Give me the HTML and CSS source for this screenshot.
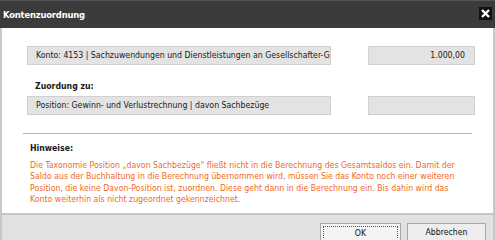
FILE: index.html
```html
<!DOCTYPE html>
<html>
<head>
<meta charset="utf-8">
<link rel="stylesheet" href="styles.css">
</head>
<body>
<div class="window">
  <div class="titlebar">
    <span class="title">Kontenzuordnung</span>
    <span class="close"><svg width="9" height="9" viewBox="0 0 9 9"><path d="M1 1L8 8M8 1L1 8" stroke="#fff" stroke-width="2.4"/></svg></span>
  </div>
  <div class="content">
    <div class="row first">
      <div class="field wide">Konto: 4153 | Sachzuwendungen und Dienstleistungen an Gesellschafter-G</div>
      <div class="field narrow amount">1.000,00</div>
    </div>
    <div class="label">Zuordung zu:</div>
    <div class="row">
      <div class="field wide">Position: Gewinn- und Verlustrechnung | davon Sachbezüge</div>
      <div class="field narrow"></div>
    </div>
    <div class="sep"></div>
    <div class="hint-title">Hinweise:</div>
    <p class="hint">Die Taxonomie Position „davon Sachbezüge" fließt nicht in die Berechnung des Gesamtsaldos ein. Damit der<br>Saldo aus der Buchhaltung in die Berechnung übernommen wird, müssen Sie das Konto noch einer weiteren<br>Position, die keine Davon-Position ist, zuordnen. Diese geht dann in die Berechnung ein. Bis dahin wird das<br>Konto weiterhin als nicht zugeordnet gekennzeichnet.</p>
  </div>
  <div class="footer">
    <button class="btn ok"><span class="focus">OK</span></button>
    <button class="btn">Abbrechen</button>
  </div>
</div>
</body>
</html>
```
FILE: styles.css
```css
html, body { margin: 0; padding: 0; background: #fff; }
body { font-family: "DejaVu Sans Condensed", "DejaVu Sans", sans-serif; font-size: 8.7px; color: #1a1a1a; }
.window { width: 495px; height: 240px; display: flex; flex-direction: column; box-sizing: border-box; overflow: hidden; }
.titlebar { height: 28px; background: #3b3b3b; border-top: 1px solid #555; display: flex; align-items: center; justify-content: space-between; padding: 0 3px 0 3px; box-sizing: border-box; flex: none; }
.title { color: #fff; font-weight: bold; font-size: 9.4px; letter-spacing: -0.2px; margin-top: -1px; }
.close { width: 13px; height: 13px; background: #111; display: flex; align-items: center; justify-content: center; margin-top: -2px; }
.content { flex: 1; min-height: 0; overflow: hidden; border-left: 2px solid #c8c8c8; border-right: 2px solid #c8c8c8; padding: 18px 0 0 25px; box-sizing: border-box; }
.row { display: flex; gap: 37px; }
.field { height: 19px; box-sizing: border-box; background: #e3e3e3; border: 1px solid #d0d0d0; line-height: 17px; padding: 0 8px; white-space: nowrap; overflow: hidden; }
.wide { width: 304px; }
.narrow { width: 107px; }
.amount { text-align: right; padding-right: 9px; }
.label { font-weight: bold; margin: 15px 0 4px 8px; line-height: 12px; }
.sep { height: 1px; background: #b5b5b5; width: 449px; margin: 18px 0 0 -4px; }
.hint-title { font-weight: bold; margin: 8px 0 0 3px; line-height: 12px; }
.hint { color: #ef6a1e; margin: 6px 0 0 3px; line-height: 11.4px; white-space: nowrap; }
.footer { height: 27px; flex: none; background: #e1e1e1; border-top: 2px solid #c6c6c6; border-left: 2px solid #c8c8c8; border-right: 2px solid #c8c8c8; box-sizing: border-box; display: flex; justify-content: flex-end; align-items: flex-end; gap: 6px; padding-right: 7px; }
.btn { font-family: inherit; font-size: 8.7px; height: 17px; background: #ededed; border: 1px solid #a7a7a7; border-bottom: none; padding: 0; color: #111; }
.btn.ok { width: 81px; background: #f4f4f4; padding: 2px; }
.btn:not(.ok) { width: 79px; }
.focus { display: block; border: 1px dotted #555; border-bottom: none; height: 100%; box-sizing: border-box; line-height: 13px; }
```
